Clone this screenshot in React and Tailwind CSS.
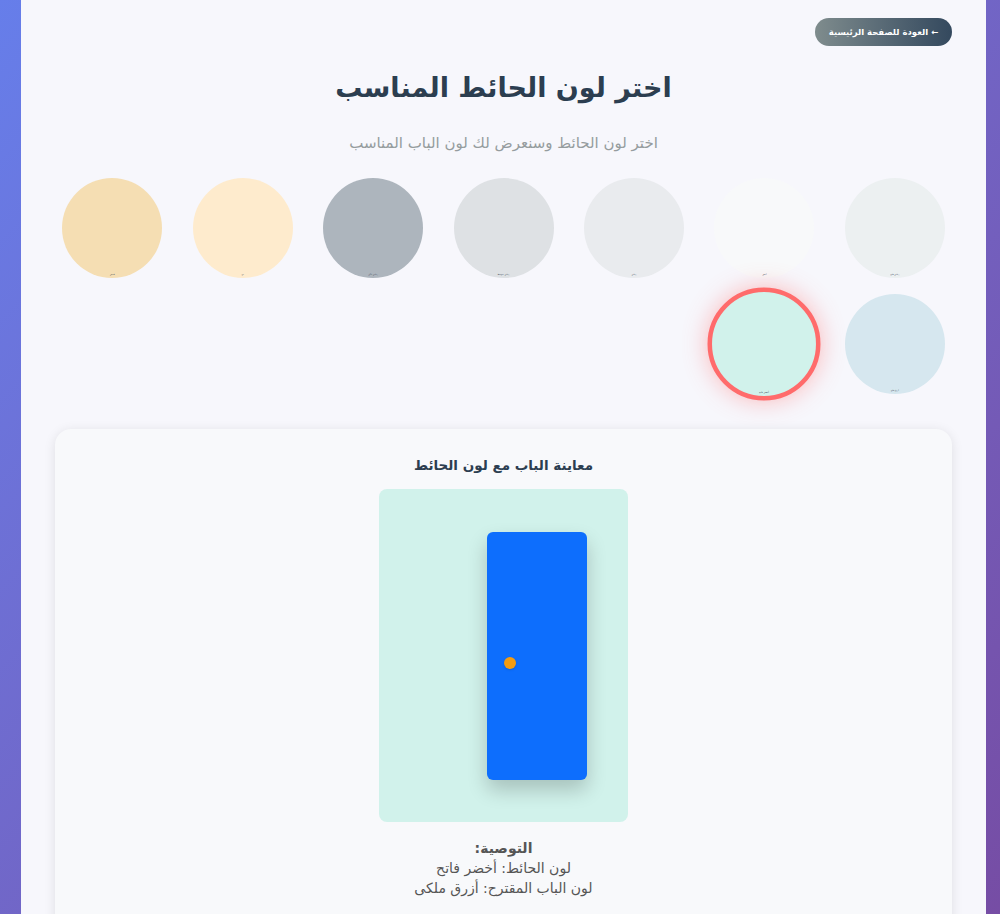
import React, { useState } from 'react'

const colors = [
  { name: 'رمادي فاتح', hex: '#ecf0f1', door: 'أزرق داكن' },
  { name: 'أبيض', hex: '#f8f9fa', door: 'بني' },
  { name: 'رمادي', hex: '#e9ebee', door: 'أسود' },
  { name: 'رمادي متوسط', hex: '#dee1e4', door: 'أبيض' },
  { name: 'رمادي داكن', hex: '#adb5bd', door: 'أبيض' },
  { name: 'بيج', hex: '#feebcd', door: 'بني' },
  { name: 'قمحي', hex: '#f5deb3', door: 'بني داكن' },
  { name: 'أزرق فاتح', hex: '#d6e7ef', door: 'أبيض' },
  { name: 'أخضر فاتح', hex: '#d1f2eb', door: 'أزرق ملكى', doorHex: '#0d6efd' },
]

function App() {
  const [selected, setSelected] = useState(8)
  const current = colors[selected]

  return (
    <div className="min-h-screen bg-gradient-to-br from-[#667eea] to-[#764ba2]" style={{ fontFamily: '"DejaVu Sans", "Noto Sans", sans-serif' }}>
      <div dir="rtl" className="ml-[21px] w-[965px] min-h-[914px] bg-[#f7f7fc] px-[34px] pt-[18px] pb-10">
        <div className="flex justify-start">
          <button className="h-7 w-[137px] rounded-full bg-gradient-to-l from-[#34495e] to-[#7f8c8d] text-[8.5px] font-bold text-white">
            ← العودة للصفحة الرئيسية
          </button>
        </div>

        <h1 className="mt-[22px] text-center text-[27px] leading-[40px] font-bold text-[#2c3e50]">
          اختر لون الحائط المناسب
        </h1>
        <p className="mt-[23px] text-center text-[15px] leading-6 text-[#959c9e]">
          اختر لون الحائط وسنعرض لك لون الباب المناسب
        </p>

        <div className="mt-[23px] grid grid-cols-7 gap-x-4 gap-y-4 justify-items-center">
          {colors.map((c, i) => (
            <button
              key={c.hex}
              onClick={() => setSelected(i)}
              className={
                i === selected
                  ? 'relative h-[100px] w-[100px] rounded-full border-[4px] border-[#ff6b6b] scale-[1.13] shadow-[0_0_22px_rgba(255,107,107,0.45)]'
                  : 'relative h-[100px] w-[100px] rounded-full'
              }
              style={{ backgroundColor: c.hex }}
            >
              <span className="absolute bottom-[2px] left-1/2 -translate-x-1/2 whitespace-nowrap text-[2px] text-gray-700">
                {c.name}
              </span>
            </button>
          ))}
        </div>

        <div className="mt-[35px] rounded-2xl bg-[#f8f9fb] pt-[26px] pb-10 shadow-[0_2px_12px_rgba(0,0,0,0.1)]">
          <h3 className="text-center text-[13.5px] leading-5 font-bold text-[#2c3e50]">
            معاينة الباب مع لون الحائط
          </h3>
          <div dir="ltr" className="mx-auto mt-[14px] flex h-[333px] w-[249px] items-center rounded-lg pl-[108px]" style={{ backgroundColor: current.hex }}>
            <div className="relative h-[248px] w-[100px] rounded-md bg-[#0d6efd] shadow-[0_10px_20px_rgba(0,0,0,0.2)]">
              <div className="absolute left-[17px] top-[125px] h-3 w-3 rounded-full bg-[#f39c12] shadow-sm"></div>
            </div>
          </div>
          <div className="mt-[16px] text-center text-[14px] leading-5 text-[#555]">
            <p className="font-bold">التوصية:</p>
            <p>لون الحائط: {current.name}</p>
            <p>لون الباب المقترح: {current.door}</p>
          </div>
        </div>
      </div>
    </div>
  )
}

export default App
